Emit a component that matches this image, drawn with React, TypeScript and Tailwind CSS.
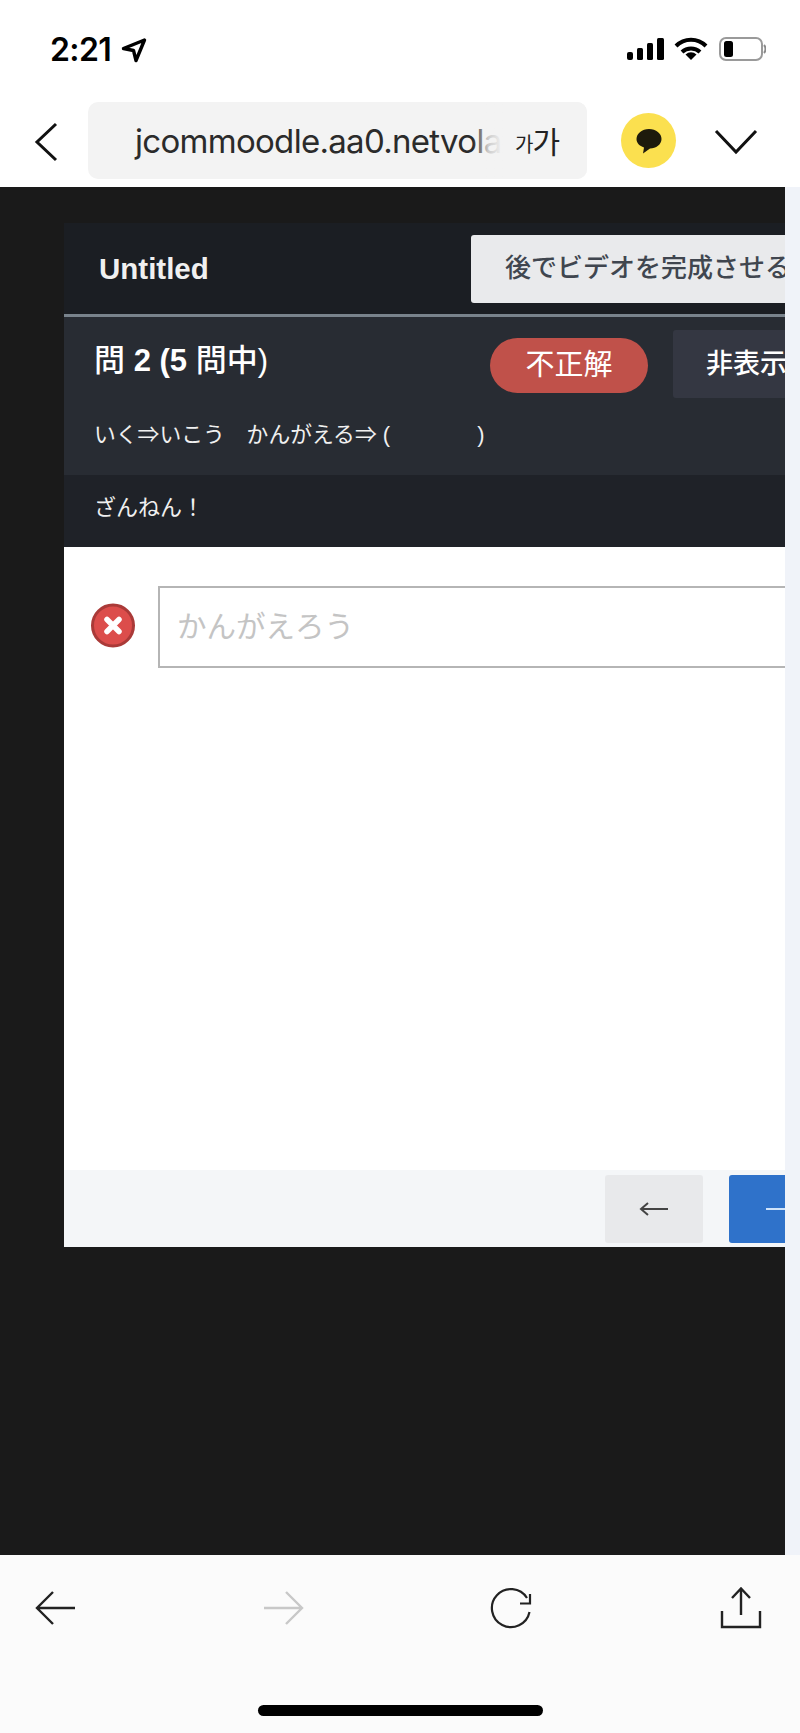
const jp = { fontFamily: '"Liberation Sans", "Noto Sans CJK JP", sans-serif' };

const StatusBar = () => (
  <div className="flex h-[100px] items-start justify-between pt-[32px] pl-[50px] pr-[34px]">
    <div className="flex items-center">
      <span className="font-['Inter',sans-serif] text-[32px] leading-[36px] font-semibold tracking-[-0.6px] text-black">2:21</span>
      <svg width="26" height="26" viewBox="0 0 26 26" className="ml-[10px]" fill="none" stroke="#000" strokeWidth="3.4" strokeLinejoin="round">
        <path d="M23.5 3 L2.5 11.5 L12.5 13.5 L15 23.5 Z" />
      </svg>
    </div>
    <div className="mt-[5px] flex items-center">
      <svg width="38" height="24" viewBox="0 0 38 24" fill="#000">
        <rect x="0" y="15" width="6" height="8" rx="2" />
        <rect x="10" y="11" width="6" height="12" rx="1.5" />
        <rect x="20" y="6" width="6" height="17" rx="1.5" />
        <rect x="30" y="1" width="7" height="22" rx="1.5" />
      </svg>
      <svg width="34" height="24" viewBox="0 0 34 24" className="ml-[9px]" fill="none" stroke="#000" strokeWidth="4">
        <path d="M2 9 A21 21 0 0 1 32 9" />
        <path d="M8 15 A13 13 0 0 1 26 15" />
        <path d="M17 23 L11.5 17.5 A8 8 0 0 1 22.5 17.5 Z" fill="#000" stroke="none" />
      </svg>
      <svg width="47" height="24" viewBox="0 0 47 24" className="ml-[11px]" fill="none">
        <rect x="1" y="1" width="42" height="22" rx="6" stroke="#9a9a9a" strokeWidth="2" />
        <rect x="5" y="4" width="9" height="16" rx="2.5" fill="#000" />
        <path d="M45 8 C47 10 47 14 45 16" stroke="#8a8a8a" strokeWidth="2" />
      </svg>
    </div>
  </div>
);

const UrlBar = () => (
  <div className="flex h-[87px] items-start">
    <svg width="24" height="40" viewBox="0 0 24 40" className="mt-[22px] ml-[34px]" fill="none" stroke="#111" strokeWidth="3">
      <path d="M22 2 L3 20 L22 38" />
    </svg>
    <div className="relative mt-[2px] ml-[30px] flex h-[77px] w-[499px] items-center overflow-hidden rounded-[10px] bg-[#f3f3f3] pl-[47px]">
      <span className="font-['Inter',sans-serif] text-[33px] leading-[40px] tracking-[-0.7px] whitespace-nowrap text-[#2b2b2b]">jcommoodle.aa0.netvola</span>
      <div className="absolute top-0 right-[84px] h-full w-[30px] bg-gradient-to-r from-transparent via-[#f3f3f3]/80 to-[#f3f3f3]" />
      <div className="absolute top-0 right-0 flex h-full w-[84px] items-center bg-[#f3f3f3] pl-[12px] font-['Noto_Sans_CJK_KR',sans-serif] text-[#222]">
        <span className="mt-[6px] text-[20px]">가</span>
        <span className="-ml-[1px] text-[30px]">가</span>
      </div>
    </div>
    <div className="mt-[13px] ml-[34px] flex h-[55px] w-[55px] items-center justify-center rounded-full bg-[#fbe04f]">
      <svg width="28" height="28" viewBox="0 0 28 28" fill="#1d1a0c">
        <path d="M14 2 C21 2 26.5 6.5 26.5 12 C26.5 17.5 21 21.5 15 21.5 L8 26.5 L9 20.5 C4.5 19 1.5 16 1.5 12 C1.5 6.5 7 2 14 2 Z" />
      </svg>
    </div>
    <svg width="44" height="26" viewBox="0 0 44 26" className="mt-[29px] ml-[38px]" fill="none" stroke="#111" strokeWidth="3">
      <path d="M2 2 L22 23 L42 2" />
    </svg>
  </div>
);

const Card = () => (
  <div className="mt-[36px] ml-[64px] w-[900px] shrink-0" style={jp}>
    <div className="flex h-[91px] items-center bg-[#1b1e23] pl-[35px]">
      <span className="mt-[2px] w-[372px] text-[29.5px] font-bold text-[#f0f0f0]">Untitled</span>
      <div className="flex h-[68px] w-[420px] items-center rounded-[3px] bg-[#e9eaec] pl-[34px] text-[26px] font-medium whitespace-nowrap text-[#40464f]">後でビデオを完成させる</div>
    </div>
    <div className="h-[3px] bg-[#79838c]" />
    <div className="h-[158px] bg-[#282c33] pr-[31px] pl-[30px]">
      <div className="flex h-[81px] items-start pt-[13px]">
        <span className="mt-[11px] w-[396px] text-[31px] leading-[40px] font-medium text-white">問 <span className="font-bold">2 (5</span> 問中)</span>
        <div className="mt-[8px] flex h-[55px] w-[158px] items-center justify-center rounded-full bg-[#c0514a] text-[29px] text-white">不正解</div>
        <div className="ml-[25px] flex h-[68px] w-[200px] items-center rounded-[3px] bg-[#343742] pl-[33px] text-[27px] font-medium text-white">非表示</div>
      </div>
      <div className="mt-[22px] text-[21.8px] leading-[30px] whitespace-pre text-[#f0f0f0]">いく⇒いこう　かんがえる⇒ (　　　　)</div>
    </div>
    <div className="flex h-[72px] items-start bg-[#1f2228] pt-[17px] pl-[30px] text-[22px] leading-[32px] text-[#f0f0f0]">ざんねん！</div>
    <div className="flex h-[623px] items-start bg-white pt-[39px]">
      <svg width="44" height="45" viewBox="0 0 44 45" className="mt-[17px] ml-[27px]">
        <circle cx="22" cy="22.5" r="20.5" fill="#dc4d4b" stroke="#aa3a38" strokeWidth="3" />
        <path d="M16 16.5 L28 28.5 M28 16.5 L16 28.5" stroke="#fff" strokeWidth="5.5" strokeLinecap="round" />
      </svg>
      <div className="ml-[23px] flex h-[82px] w-[700px] items-center border-2 border-[#b5b5b5] pl-[17px] text-[29.5px] text-[#c4c4c4]">かんがえろう</div>
    </div>
    <div className="flex h-[77px] items-center bg-[#f4f6f8] pl-[541px]">
      <div className="flex h-[68px] w-[98px] items-center justify-center rounded-[3px] bg-[#e8e9eb]">
        <svg width="30" height="16" viewBox="0 0 30 16" fill="none" stroke="#444" strokeWidth="2">
          <path d="M29 8 L2 8 M9 2 L2 8 L9 14" />
        </svg>
      </div>
      <div className="ml-[26px] flex h-[68px] w-[102px] items-center justify-center rounded-[3px] bg-[#2f72ca]">
        <svg width="30" height="16" viewBox="0 0 30 16" fill="none" stroke="#cfe3fa" strokeWidth="2">
          <path d="M1 8 L28 8 M21 2 L28 8 L21 14" />
        </svg>
      </div>
    </div>
  </div>
);

const BottomBar = () => (
  <div className="relative h-[178px] bg-[#fbfbfb]">
    <div className="flex items-start justify-between pt-[32px] pl-[35px] pr-[38px]">
      <svg width="41" height="34" viewBox="0 0 41 34" className="mt-[4px]" fill="none" stroke="#222" strokeWidth="2.4">
        <path d="M40 17 L2 17 M18 1 L2 17 L18 33" />
      </svg>
      <svg width="41" height="34" viewBox="0 0 41 34" className="mt-[4px] ml-[187px]" fill="none" stroke="#c8c8c8" strokeWidth="2.4">
        <path d="M1 17 L39 17 M23 1 L39 17 L23 33" />
      </svg>
      <svg width="44" height="42" viewBox="0 0 44 42" className="ml-[184px]" fill="none" stroke="#222" strokeWidth="2.2">
        <path d="M38 11 A19 19 0 1 0 40.5 25" />
        <path d="M41 7 L41 16.5 L31 16.5" />
      </svg>
      <svg width="42" height="42" viewBox="0 0 42 42" className="ml-[187px]" fill="none" stroke="#222" strokeWidth="2.4">
        <path d="M21 28 L21 2 M12 11 L21 1.5 L30 11" />
        <path d="M2 24 L2 40 L40 40 L40 24" />
      </svg>
    </div>
    <div className="absolute top-[150px] left-[258px] h-[11px] w-[285px] rounded-full bg-black" />
  </div>
);

export default function App() {
  return (
    <div className="flex h-[1733px] w-[800px] flex-col overflow-hidden bg-white">
      <StatusBar />
      <UrlBar />
      <div className="flex h-[1368px] items-stretch">
        <div className="flex min-w-0 flex-1 overflow-hidden bg-[#1a1a1a]">
          <div><Card /></div>
        </div>
        <div className="w-[15px] shrink-0 bg-[#f0f3f9]" />
      </div>
      <BottomBar />
    </div>
  );
}
